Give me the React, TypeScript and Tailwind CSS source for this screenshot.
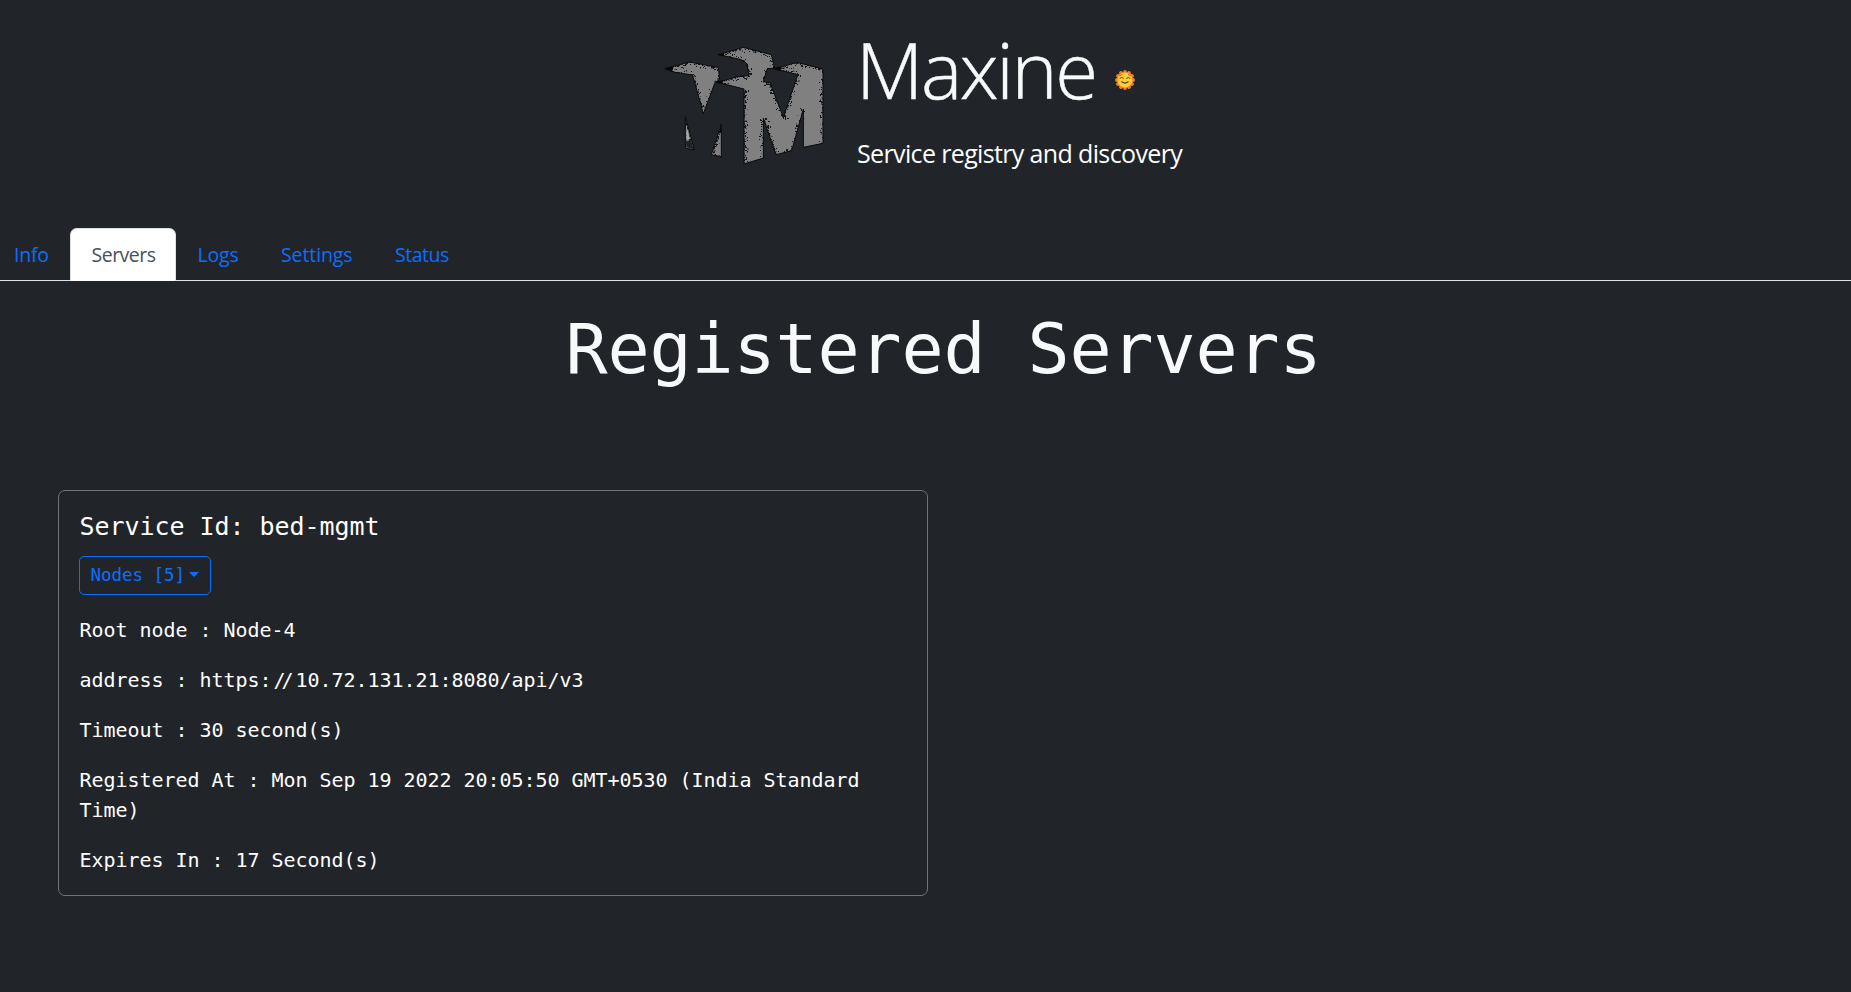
const BIRD = "45,116 118,96 205,112 209,148 194,160 160,252 128,135 75,127";
const FOOT_LEFT = "106,260 133,360 106,354";
const FOOT_RIGHT = "214,282 214,382 184,374";
const MARK =
  "205,157 265,139 297,137 290,100 270,88 205,74 280,52 364,74 374,114 352,116 340,155 360,158 400,262 443,134 375,117 440,97 519,117 519,340 460,352 460,238 425,362 378,374 340,265 340,384 282,402 282,177 222,162";

type Speck = { x: number; y: number; w: number; h: number; dark: boolean };

function makeSpecks(shape: string, seed: number, skip: number[] = []): Speck[] {
  const pts = shape.split(" ").map((p) => p.split(",").map(Number));
  const out: Speck[] = [];
  let s = seed;
  const rnd = () => {
    s = (s * 16807) % 2147483647;
    return s / 2147483647;
  };
  pts.forEach(([x1, y1], i) => {
    if (skip.includes(i)) return;
    const [x2, y2] = pts[(i + 1) % pts.length];
    const len = Math.hypot(x2 - x1, y2 - y1);
    for (let d = 0; d < len; d += 1.8) {
      const t = d / len;
      const depth = rnd() * rnd() * 15;
      const sign = rnd() > 0.5 ? 1 : -1;
      out.push({
        x: Math.round((x1 + (x2 - x1) * t + (sign * depth * (y2 - y1)) / len) / 3) * 3,
        y: Math.round((y1 + (y2 - y1) * t - (sign * depth * (x2 - x1)) / len) / 3) * 3,
        w: rnd() > 0.8 ? 6 : 3,
        h: rnd() > 0.85 ? 6 : 3,
        dark: rnd() > 0.35,
      });
    }
  });
  return out;
}

function Rough({ id, points, seed, skip }: { id: string; points: string; seed: number; skip?: number[] }) {
  return (
    <g>
      <clipPath id={id}>
        <polygon points={points} />
      </clipPath>
      <polygon points={points} fill="#808080" />
      <g clipPath={`url(#${id})`}>
        {makeSpecks(points, seed, skip).map((k, i) => (
          <rect key={i} x={k.x} y={k.y} width={k.w} height={k.h} fill={k.dark ? "#15171a" : "#505153"} />
        ))}
      </g>
      <polygon points={points} fill="none" stroke="#0a0a0b" strokeWidth="3" strokeLinejoin="round" />
    </g>
  );
}

function Logo() {
  return (
    <svg viewBox="0 0 570 435" className="h-[145px] w-[190px] shrink-0" aria-hidden="true">
      <Rough id="bird" points={BIRD} seed={77} />
      <Rough id="foot-l" points={FOOT_LEFT} seed={31} />
      <polygon points="109,288 117,316 119,326 109,330" fill="#a9a9a9" />
      <polygon points="109,336 122,328 131,358 109,352" fill="#222" />
      <Rough id="foot-r" points={FOOT_RIGHT} seed={51} skip={[0]} />
      <polygon points="214,284 214,305 205,312" fill="#0a0a0b" />
      <Rough id="mark" points={MARK} seed={913} skip={[17, 18, 23, 25]} />
      <polygon points="43,116 72,107 66,125" fill="#080808" />
      <polygon points="201,74 222,68 222,79" fill="#080808" />
      <polygon points="190,156 220,150 216,162" fill="#080808" />
      <polygon points="364,116 392,109 392,122" fill="#080808" />
    </svg>
  );
}

function Sun() {
  return (
    <svg viewBox="0 0 20 20" className="mt-[22px] h-5 w-5 shrink-0" aria-hidden="true">
      {Array.from({ length: 12 }, (_, i) => (
        <circle key={i} cx="10" cy="1.9" r="1.9" fill="#f5792a" transform={`rotate(${i * 30} 10 10)`} />
      ))}
      <circle cx="10" cy="10" r="8.1" fill="#f5832a" />
      <circle cx="10" cy="10" r="7.4" fill="#ffcf38" />
      <g fill="none" stroke="#5a4528" strokeLinecap="round">
        <path d="M5 8.2Q6.7 6.4 8.4 8.2M11.6 8.2Q13.3 6.4 15 8.2" strokeWidth="1" />
        <path d="M4.8 5.6L6.6 4.7M13.4 4.7L15.2 5.6" strokeWidth=".7" />
        <path d="M6.7 11.8Q10 14.4 13.3 11.8" strokeWidth="1.1" />
      </g>
    </svg>
  );
}

const details = [
  "Root node : Node-4",
  "address : https://10.72.131.21:8080/api/v3",
  "Timeout : 30 second(s)",
  "Registered At : Mon Sep 19 2022 20:05:50 GMT+0530 (India Standard Time)",
  "Expires In : 17 Second(s)",
];

function Detail({ text }: { text: string }) {
  const [before, after] = text.split("//");
  if (after === undefined) return <p>{text}</p>;
  return (
    <p>
      {before}
      <span className="ml-[2px] tracking-[-4px]">/</span>
      <span className="mr-[2px]">/</span>
      {after}
    </p>
  );
}

export default function App() {
  return (
    <div className="min-h-screen overflow-hidden bg-[#212529] font-['Open_Sans',sans-serif] text-white">
      <header className="flex h-[228px] justify-center gap-[17px] pt-[30px]">
        <Logo />
        <div className="-mt-[3px] w-[344px] whitespace-nowrap">
          <div className="flex h-[84px] items-center">
            <h1 className="-ml-px w-[259px] text-[78px] leading-[84px] font-light tracking-[-2.4px] text-[#f8f9fa] [-webkit-text-stroke:0.5px_#f8f9fa]">
              Maxine
            </h1>
            <Sun />
          </div>
          <p className="mt-[23px] text-[25px] leading-[38px] tracking-[-0.64px]">Service registry and discovery</p>
        </div>
      </header>

      <nav className="flex h-[53px] border-b border-[#dee2e6] text-[19.5px] leading-[30px] tracking-[-0.4px] text-[#0d6efd]">
        <a className="w-[70px] pt-[12px] pl-[14px] tracking-[-0.2px]">Info</a>
        <a className="-mb-px w-[106px] rounded-t-[7px] border border-b-0 border-[#dee2e6] bg-white pt-[11px] pl-[20.5px] tracking-[-0.5px] text-[#495057]">
          Servers
        </a>
        <a className="w-[84px] pt-[12px] pl-[21.5px] tracking-[-0.2px]">Logs</a>
        <a className="w-[114px] pt-[12px] pl-[21px] tracking-[-0.1px]">Settings</a>
        <a className="pt-[12px] pl-[21px] tracking-[-0.5px]">Status</a>
      </nav>

      <main className="font-['DejaVu_Sans_Mono',monospace]">
        <h2 className="mt-[26px] pl-[36px] text-center text-[70px] leading-[84px] tracking-[-0.14px] text-[#f8f9fa]">
          Registered Servers
        </h2>
        <section className="mt-[99px] ml-[58px] h-[406px] w-[870px] rounded-[7px] border border-[#6c757d] px-5 pt-[21px] text-[20px] leading-[30px] tracking-[-0.04px]">
          <h3 className="pl-[0.5px] text-[25px] leading-[30px] tracking-[-0.05px]">Service Id: bed-mgmt</h3>
          <button className="mt-[14px] flex h-[39px] w-[132px] items-center rounded-[5px] border border-[#0d6efd] pb-[2px] pl-[10.5px] text-[17.5px] tracking-[-0.04px] text-[#0d6efd]">
            Nodes [5]
            <svg viewBox="0 0 10 5" className="ml-[4px] h-[5px] w-[10px]" aria-hidden="true">
              <path d="M0 0H10L5 5Z" fill="#0d6efd" />
            </svg>
          </button>
          <div className="mt-5 flex flex-col gap-5 pl-[0.5px]">
            {details.map((line) => (
              <Detail key={line} text={line} />
            ))}
          </div>
        </section>
      </main>
    </div>
  );
}
